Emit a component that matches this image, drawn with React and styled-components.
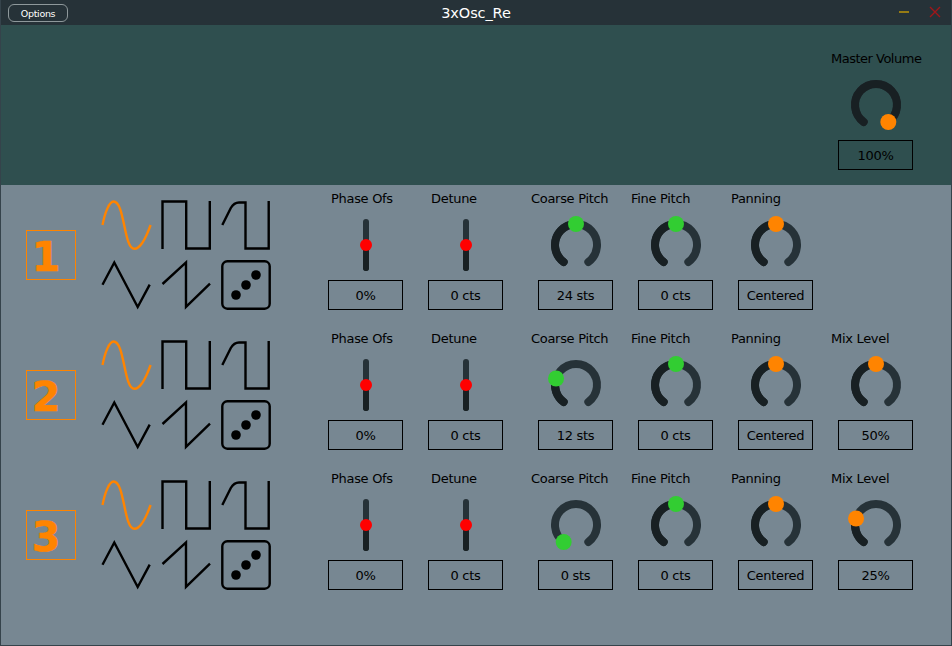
import React from "react";
import styled, { createGlobalStyle } from "styled-components";

const ORANGE = "#ff8400";
const GREEN = "#32cd32";
const TRACK = "#263238";
const FILLED = "#182023";

const Global = createGlobalStyle`
  *, *::before, *::after { box-sizing: border-box; }
  body { margin: 0; font-family: "DejaVu Sans", Verdana, sans-serif; }
`;

const Window = styled.main`
  width: 952px;
  height: 646px;
  display: flex;
  flex-direction: column;
  overflow: hidden;
  border: solid #35434b;
  border-width: 0 1px 1px;
  background: #778792;
  color: #000;
`;

const TitleBar = styled.header`
  height: 25px;
  flex: none;
  display: grid;
  grid-template-columns: 1fr auto 1fr;
  align-items: center;
  background: #263238;
`;

const OptionsButton = styled.button`
  width: 60px;
  height: 18px;
  margin: 1px 0 0 7px;
  padding: 2px 0 0;
  border: 1px solid #8e989b;
  border-radius: 6px;
  background: transparent;
  color: #fff;
  font: 9.5px/14px "DejaVu Sans", sans-serif;
  letter-spacing: -0.3px;
`;

const Title = styled.h1`
  margin: 0;
  padding-top: 1px;
  color: #fff;
  font-size: 14.5px;
  font-weight: 400;
  line-height: 24px;
  letter-spacing: -0.1px;
`;

const WindowControls = styled.div`
  display: flex;
  justify-content: flex-end;
  gap: 19px;
  padding: 0 10px 1px 0;

  svg { display: block; }
`;

const MasterPanel = styled.section`
  height: 160px;
  flex: none;
  display: flex;
  justify-content: flex-end;
  padding: 20px 20px 0 0;
  background: #2f4f4f;
`;

const Oscillator = styled.section`
  height: 140px;
  flex: none;
  display: flex;
  padding-left: 25px;
`;

const Badge = styled.div`
  width: 50px;
  height: 50px;
  flex: none;
  margin: 45px 25px 0 0;
  padding-right: 10px;
  border: 1px solid ${ORANGE};
  color: ${ORANGE};
  font-size: 41px;
  font-weight: 700;
  line-height: 52px;
  -webkit-text-stroke: 0.7px ${ORANGE};
  display: flex;
  justify-content: center;
`;

const WaveGrid = styled.div`
  display: grid;
  flex: none;
  grid-template-columns: repeat(3, 50px);
  grid-auto-rows: 50px;
  gap: 10px;
  margin: 15px 57px 0 0;
`;

const WaveIcon = styled.svg`
  display: block;
  width: 50px;
  height: 50px;
  overflow: visible;
  fill: none;
  stroke: ${(p) => (p.$active ? ORANGE : "#000")};
  stroke-width: 2.4;
`;

const Sliders = styled.div`
  display: flex;
  margin-right: 3px;
`;

const Control = styled.div`
  width: 100px;
  flex: none;
  display: flex;
  flex-direction: column;
  padding-left: ${(p) => p.$inset}px;
`;

const Knobs = styled.div`
  display: flex;
`;

const Label = styled.span`
  height: 30px;
  padding-top: 4px;
  margin-left: ${(p) => p.$shift}px;
  font-size: 13px;
  line-height: 20px;
  letter-spacing: ${(p) => (p.$tight ? -0.5 : -0.3)}px;
  white-space: nowrap;
`;

const Dial = styled.svg`
  display: block;
  flex: none;
  width: 75px;
  height: 60px;
`;

const ValueBox = styled.output`
  width: 75px;
  height: 30px;
  margin-top: 5px;
  padding-top: 1px;
  border: 1px solid #000;
  display: flex;
  align-items: center;
  justify-content: center;
  font-size: 13px;
  line-height: 27px;
  letter-spacing: -0.3px;
  white-space: nowrap;
`;

const START = Math.PI * 1.2;
const SWEEP = Math.PI * 1.6;
const RADIUS = 21;

const pointAt = (value) => {
  const a = START + SWEEP * value;
  return [38 + RADIUS * Math.sin(a), 30 - RADIUS * Math.cos(a)];
};

const arc = (from, to) => {
  const large = (to - from) * SWEEP > Math.PI ? 1 : 0;
  return `M${pointAt(from).join(" ")}A${RADIUS} ${RADIUS} 0 ${large} 1 ${pointAt(to).join(" ")}`;
};

function Knob({ label, text, value, color = ORANGE, tight = false }) {
  const [x, y] = pointAt(value);
  return (
    <Control $inset={7}>
      <Label $shift={-7} $tight={tight}>{label}</Label>
      <Dial viewBox="0 0 75 60" fill="none" strokeWidth="8" strokeLinecap="round">
        <path d={arc(0, 1)} stroke={TRACK} />
        {value > 0 && <path d={arc(0, value)} stroke={FILLED} />}
        <circle cx={x} cy={y} r="8" fill={color} />
      </Dial>
      <ValueBox>{text}</ValueBox>
    </Control>
  );
}

function Slider({ label, text }) {
  return (
    <Control $inset={0}>
      <Label $shift={3}>{label}</Label>
      <Dial viewBox="0 0 75 60" strokeWidth="6" strokeLinecap="round">
        <path d="M38 7V53" stroke={TRACK} />
        <path d="M38 30V53" stroke={FILLED} />
        <circle cx="38" cy="30" r="6" fill="#f00" />
      </Dial>
      <ValueBox>{text}</ValueBox>
    </Control>
  );
}

const WAVES = [
  "M1.5 25C4 12 8.5 1.5 12.5 1.5C24 1.5 22.5 48.8 33.5 48.8C40 48.8 46 35 49.6 25",
  "M1.5 49V1.5H25.2V48.5H48.8V1",
  "M1.3 25L9.8 8Q13 2.5 18 2.5H24.5V48.5H47.7V1",
  "M1.5 24.8L13.3 2.5L36.7 47L48.7 24.6",
  "M1.5 24L25 2.4V46.8L49 23.6",
];

function Waves() {
  return (
    <WaveGrid>
      {WAVES.map((d, i) => (
        <WaveIcon key={d} $active={i === 0} viewBox="0 0 50 50">
          <path d={d} />
        </WaveIcon>
      ))}
      <WaveIcon viewBox="0 0 50 50">
        <rect x="1.3" y="1.3" width="47.4" height="47.4" rx="5" />
        <g fill="#000" stroke="none">
          <circle cx="15" cy="35" r="4.8" />
          <circle cx="25" cy="25" r="4.8" />
          <circle cx="35" cy="15" r="4.8" />
        </g>
      </WaveIcon>
    </WaveGrid>
  );
}

const OSCILLATORS = [
  { coarse: ["24 sts", 0.5] },
  { coarse: ["12 sts", 0.25], mix: ["50%", 0.5] },
  { coarse: ["0 sts", 0], mix: ["25%", 0.25] },
];

export default function App() {
  return (
    <>
      <Global />
      <Window>
        <TitleBar>
          <OptionsButton>Options</OptionsButton>
          <Title>3xOsc_Re</Title>
          <WindowControls>
            <svg width="12" height="12" viewBox="0 0 12 12">
              <path d="M1 6H11" stroke="#967b14" strokeWidth="2" />
            </svg>
            <svg width="12" height="12" viewBox="0 0 12 12">
              <path d="M1 1L11 11M11 1L1 11" stroke="#a0161a" strokeWidth="1.4" />
            </svg>
          </WindowControls>
        </TitleBar>
        <MasterPanel>
          <Knob label="Master Volume" text="100%" value={1} tight />
        </MasterPanel>
        {OSCILLATORS.map(({ coarse, mix }, i) => (
          <Oscillator key={i}>
            <Badge>{i + 1}</Badge>
            <Waves />
            <Sliders>
              <Slider label="Phase Ofs" text="0%" />
              <Slider label="Detune" text="0 cts" />
            </Sliders>
            <Knobs>
              <Knob label="Coarse Pitch" text={coarse[0]} value={coarse[1]} color={GREEN} />
              <Knob label="Fine Pitch" text="0 cts" value={0.5} color={GREEN} />
              <Knob label="Panning" text="Centered" value={0.5} />
              {mix && <Knob label="Mix Level" text={mix[0]} value={mix[1]} />}
            </Knobs>
          </Oscillator>
        ))}
      </Window>
    </>
  );
}
